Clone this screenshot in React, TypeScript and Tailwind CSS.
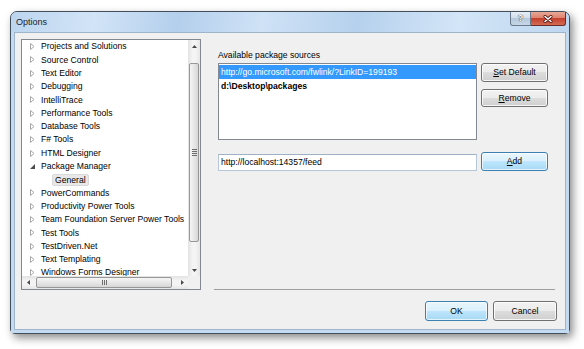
import React from 'react'

type Node = { label: string; open?: boolean; child?: boolean }

const nodes: Node[] = [
  { label: 'Projects and Solutions' },
  { label: 'Source Control' },
  { label: 'Text Editor' },
  { label: 'Debugging' },
  { label: 'IntelliTrace' },
  { label: 'Performance Tools' },
  { label: 'Database Tools' },
  { label: 'F# Tools' },
  { label: 'HTML Designer' },
  { label: 'Package Manager', open: true },
  { label: 'General', child: true },
  { label: 'PowerCommands' },
  { label: 'Productivity Power Tools' },
  { label: 'Team Foundation Server Power Tools' },
  { label: 'Test Tools' },
  { label: 'TestDriven.Net' },
  { label: 'Text Templating' },
  { label: 'Windows Forms Designer' },
]

const Btn = ({ children, primary, className }: any) => (
  <button
    className={
      primary
        ? 'flex items-center justify-center rounded-[3px] border border-[#3c7fb1] bg-[linear-gradient(#eaf6fd_0%,#d9f0fc_50%,#bee6fd_50%,#a7d9f5_100%)] text-[8.6px] leading-none text-black shadow-[inset_0_0_0_1px_rgba(255,255,255,0.7)] ' +
          className
        : 'flex items-center justify-center rounded-[3px] border border-[#707070] bg-[linear-gradient(#f2f2f2_0%,#ebebeb_50%,#dddddd_50%,#cfcfcf_100%)] text-[8.6px] leading-none text-black shadow-[inset_0_0_0_1px_rgba(255,255,255,0.8)] ' +
          className
    }
  >
    {children}
  </button>
)

const Arrow = ({ dir }: { dir: 'up' | 'down' | 'left' | 'right' }) => {
  const pts = {
    up: '0,3 2.5,0 5,3',
    down: '0,0 2.5,3 5,0',
    left: '3,0 0,2.5 3,5',
    right: '0,0 3,2.5 0,5',
  }[dir]
  const vert = dir === 'up' || dir === 'down'
  return (
    <svg width={vert ? 5 : 3} height={vert ? 3 : 5} viewBox={vert ? '0 0 5 3' : '0 0 3 5'}>
      <polygon points={pts} fill="#4a4a4a" />
    </svg>
  )
}

const TreeRow = ({ node }: { node: Node }) => {
  if (node.child) {
    return (
      <div className="flex h-[13.3px] items-center pl-[30px]">
        <span className="rounded-[2px] border border-[#d9d9d9] bg-[#e8e8e8] px-[2px] text-[8.6px] leading-[10px] whitespace-nowrap">
          {node.label}
        </span>
      </div>
    )
  }
  return (
    <div className="flex h-[13.3px] items-center whitespace-nowrap">
      <div className="flex w-[19px] shrink-0 justify-center pl-[2px]">
        {node.open ? (
          <svg width="5" height="5" viewBox="0 0 5 5">
            <polygon points="5,0 5,5 0,5" fill="#4d4d4d" />
          </svg>
        ) : (
          <svg width="5" height="7" viewBox="0 0 5 7">
            <polygon points="0.5,0.5 4,3.5 0.5,6.5" fill="none" stroke="#a8a8a8" strokeWidth="1" />
          </svg>
        )}
      </div>
      <span className="text-[8.6px] leading-none">{node.label}</span>
    </div>
  )
}

export default function App() {
  return (
    <div className="h-[349px] w-[584px] overflow-hidden bg-white pl-[10px] pt-[11px] font-['Liberation_Sans',Arial,sans-serif] text-black">
      <div className="flex h-[323px] w-[560px] flex-col rounded-t-[7px] rounded-b-[5px] border border-[#414e5c] bg-[#c4daf1] shadow-[3px_4px_9px_rgba(0,0,0,0.45)]">
        {/* title bar */}
        <div className="relative flex h-[20px] shrink-0 items-center rounded-t-[6px] bg-[linear-gradient(100deg,#bcd5ef_0%,#d2e4f7_15%,#b4cfec_30%,#cfe2f6_45%,#b6d1ed_62%,#d3e5f7_80%,#bdd6ef_100%)] pl-[5px]">
          <span className="text-[9px] leading-none text-[#18222e]">Options</span>
          <div className="absolute right-[3px] top-0 flex">
            <div className="flex h-[14px] w-[21px] items-center justify-center rounded-bl-[3px] border border-t-0 border-[#6a7a8c] bg-[linear-gradient(#e6eef7_0%,#cfdceb_50%,#b5c8dc_50%,#c7d7e8_100%)]">
              <span className="text-[9px] font-bold leading-none text-white [text-shadow:0_0_1px_#333,0_0_1px_#333]">?</span>
            </div>
            <div className="flex h-[14px] w-[35px] items-center justify-center rounded-br-[3px] border border-l-0 border-t-0 border-[#6e2b26] bg-[linear-gradient(#e9a896_0%,#dc7e6a_50%,#c4402f_50%,#d36b52_100%)]">
              <svg width="10" height="8" viewBox="0 0 10 8">
                <path d="M2 1.5 L8 6.5 M8 1.5 L2 6.5" stroke="#4a1410" strokeWidth="3" strokeLinecap="round" />
                <path d="M2 1.5 L8 6.5 M8 1.5 L2 6.5" stroke="#ffffff" strokeWidth="1.6" strokeLinecap="round" />
              </svg>
            </div>
          </div>
        </div>

        {/* frame + client area */}
        <div className="flex-1 bg-[#c4daf1] px-[3px] pb-[3px]">
          <div className="flex h-full flex-col border border-[#9fb5cc] bg-[#f0f0f0] pl-[6px] pt-[6px]">
            <div className="flex h-[251px]">
              {/* tree */}
              <div className="grid h-[251px] w-[180px] shrink-0 grid-cols-[166px_12px] grid-rows-[236px_13px] border border-[#828790] bg-white">
                <div className="overflow-hidden">
                  {nodes.map((n) => (
                    <TreeRow key={n.label} node={n} />
                  ))}
                </div>
                <div className="flex flex-col bg-[linear-gradient(to_right,#e2e2e2,#f4f4f4_35%,#f4f4f4_65%,#e6e6e6)]">
                  <div className="flex h-[12px] items-center justify-center">
                    <Arrow dir="up" />
                  </div>
                  <div className="h-[11px]" />
                  <div className="mx-[1px] flex h-[179px] items-center justify-center rounded-[2px] border border-[#979797] bg-[linear-gradient(to_right,#f5f5f5,#e4e4e4_60%,#d6d6d6)]">
                    <div className="flex flex-col gap-[1px]">
                      <div className="h-px w-[5px] bg-[#6d6d6d]" />
                      <div className="h-px w-[5px] bg-[#6d6d6d]" />
                      <div className="h-px w-[5px] bg-[#6d6d6d]" />
                      <div className="h-px w-[5px] bg-[#6d6d6d]" />
                    </div>
                  </div>
                  <div className="flex-1" />
                  <div className="flex h-[12px] items-center justify-center">
                    <Arrow dir="down" />
                  </div>
                </div>
                <div className="flex bg-[linear-gradient(#e2e2e2,#f4f4f4_35%,#f4f4f4_65%,#e6e6e6)]">
                  <div className="flex w-[12px] items-center justify-center">
                    <Arrow dir="left" />
                  </div>
                  <div className="w-[2px]" />
                  <div className="my-[1px] flex w-[136px] items-center justify-center rounded-[2px] border border-[#979797] bg-[linear-gradient(#f5f5f5,#e4e4e4_60%,#d6d6d6)]">
                    <div className="flex gap-[1px]">
                      <div className="h-[5px] w-px bg-[#6d6d6d]" />
                      <div className="h-[5px] w-px bg-[#6d6d6d]" />
                      <div className="h-[5px] w-px bg-[#6d6d6d]" />
                    </div>
                  </div>
                  <div className="flex-1" />
                  <div className="flex w-[12px] items-center justify-center">
                    <Arrow dir="right" />
                  </div>
                </div>
                <div className="bg-[#f0f0f0]" />
              </div>

              {/* right panel */}
              <div className="flex flex-1 flex-col pl-[17px]">
                <div className="mt-[10px] text-[8.6px] leading-[12px]">Available package sources</div>
                <div className="mt-[2px] flex gap-[4px]">
                  <div className="h-[77px] w-[259px] border border-[#828790] bg-white pt-[1px]">
                    <div className="flex h-[14px] items-center bg-[#3399ff] pl-[2px] text-[8.6px] leading-none text-white">
                      http://go.microsoft.com/fwlink/?LinkID=199193
                    </div>
                    <div className="flex h-[14px] items-center pl-[2px] text-[8.6px] font-bold leading-none">
                      d:\Desktop\packages
                    </div>
                  </div>
                  <div className="flex w-[67px] flex-col gap-[7px]">
                    <Btn className="h-[19px] w-[67px]">
                      <span className="underline">S</span>et Default
                    </Btn>
                    <Btn className="h-[18px] w-[67px]">
                      <span className="underline">R</span>emove
                    </Btn>
                  </div>
                </div>
                <div className="mt-[12px] flex items-end gap-[4px]">
                  <div className="flex h-[17px] w-[259px] items-center border border-[#b7c7da] border-t-[#9fb1c7] bg-white pl-[2px] text-[8.6px] leading-none">
                    http://localhost:14357/feed
                  </div>
                  <Btn primary className="h-[19px] w-[67px]">
                    <span className="underline">A</span>dd
                  </Btn>
                </div>
                <div className="mr-[10px] -ml-[4px] mt-auto h-px bg-[#a0a0a0]" />
              </div>
            </div>

            <div className="mt-[11px] flex justify-end gap-[5px] pr-[8px]">
              <Btn primary className="h-[20px] w-[63px]">
                OK
              </Btn>
              <Btn className="h-[20px] w-[64px]">Cancel</Btn>
            </div>
          </div>
        </div>
      </div>
    </div>
  )
}
